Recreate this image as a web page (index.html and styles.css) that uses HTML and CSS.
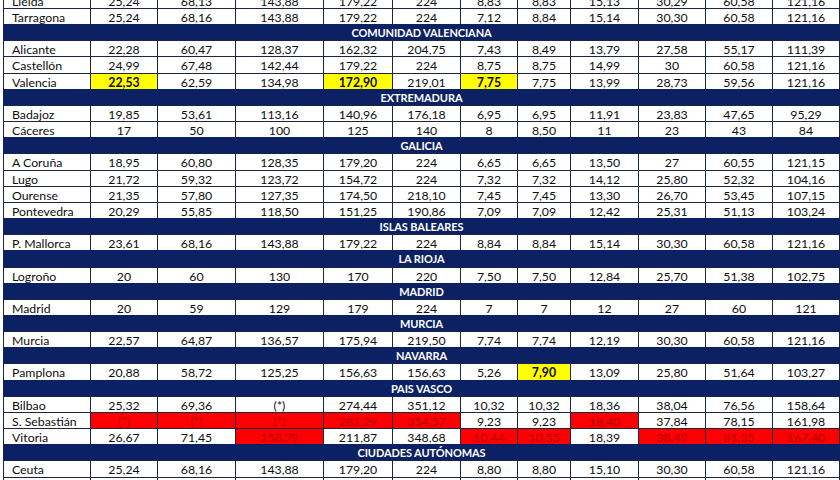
FILE: index.html
```html
<!DOCTYPE html>
<html lang="es">
<head>
<meta charset="utf-8">
<title>Tarifas</title>
<link rel="stylesheet" href="styles.css">
</head>
<body>
<div class="sheet">
  <div class="c city">Lleida</div><div class="c">25,24</div><div class="c">68,13</div><div class="c">143,88</div><div class="c">179,22</div><div class="c">224</div><div class="c">8,83</div><div class="c">8,83</div><div class="c">15,13</div><div class="c">30,29</div><div class="c">60,58</div><div class="c">121,16</div>
  <div class="c city">Tarragona</div><div class="c">25,24</div><div class="c">68,16</div><div class="c">143,88</div><div class="c">179,22</div><div class="c">224</div><div class="c">7,12</div><div class="c">8,84</div><div class="c">15,14</div><div class="c">30,30</div><div class="c">60,58</div><div class="c">121,16</div>
  <div class="h">COMUNIDAD VALENCIANA</div>
  <div class="c city">Alicante</div><div class="c">22,28</div><div class="c">60,47</div><div class="c">128,37</div><div class="c">162,32</div><div class="c">204,75</div><div class="c">7,43</div><div class="c">8,49</div><div class="c">13,79</div><div class="c">27,58</div><div class="c">55,17</div><div class="c">111,39</div>
  <div class="c city">Castellón</div><div class="c">24,99</div><div class="c">67,48</div><div class="c">142,44</div><div class="c">179,22</div><div class="c">224</div><div class="c">8,75</div><div class="c">8,75</div><div class="c">14,99</div><div class="c">30</div><div class="c">60,58</div><div class="c">121,16</div>
  <div class="c city">Valencia</div><div class="c y">22,53</div><div class="c">62,59</div><div class="c">134,98</div><div class="c y">172,90</div><div class="c">219,01</div><div class="c y">7,75</div><div class="c">7,75</div><div class="c">13,99</div><div class="c">28,73</div><div class="c">59,56</div><div class="c">121,16</div>
  <div class="h">EXTREMADURA</div>
  <div class="c city">Badajoz</div><div class="c">19,85</div><div class="c">53,61</div><div class="c">113,16</div><div class="c">140,96</div><div class="c">176,18</div><div class="c">6,95</div><div class="c">6,95</div><div class="c">11,91</div><div class="c">23,83</div><div class="c">47,65</div><div class="c">95,29</div>
  <div class="c city">Cáceres</div><div class="c">17</div><div class="c">50</div><div class="c">100</div><div class="c">125</div><div class="c">140</div><div class="c">8</div><div class="c">8,50</div><div class="c">11</div><div class="c">23</div><div class="c">43</div><div class="c">84</div>
  <div class="h">GALICIA</div>
  <div class="c city">A Coruña</div><div class="c">18,95</div><div class="c">60,80</div><div class="c">128,35</div><div class="c">179,20</div><div class="c">224</div><div class="c">6,65</div><div class="c">6,65</div><div class="c">13,50</div><div class="c">27</div><div class="c">60,55</div><div class="c">121,15</div>
  <div class="c city">Lugo</div><div class="c">21,72</div><div class="c">59,32</div><div class="c">123,72</div><div class="c">154,72</div><div class="c">224</div><div class="c">7,32</div><div class="c">7,32</div><div class="c">14,12</div><div class="c">25,80</div><div class="c">52,32</div><div class="c">104,16</div>
  <div class="c city">Ourense</div><div class="c">21,35</div><div class="c">57,80</div><div class="c">127,35</div><div class="c">174,50</div><div class="c">218,10</div><div class="c">7,45</div><div class="c">7,45</div><div class="c">13,30</div><div class="c">26,70</div><div class="c">53,45</div><div class="c">107,15</div>
  <div class="c city">Pontevedra</div><div class="c">20,29</div><div class="c">55,85</div><div class="c">118,50</div><div class="c">151,25</div><div class="c">190,86</div><div class="c">7,09</div><div class="c">7,09</div><div class="c">12,42</div><div class="c">25,31</div><div class="c">51,13</div><div class="c">103,24</div>
  <div class="h">ISLAS BALEARES</div>
  <div class="c city">P. Mallorca</div><div class="c">23,61</div><div class="c">68,16</div><div class="c">143,88</div><div class="c">179,22</div><div class="c">224</div><div class="c">8,84</div><div class="c">8,84</div><div class="c">15,14</div><div class="c">30,30</div><div class="c">60,58</div><div class="c">121,16</div>
  <div class="h">LA RIOJA</div>
  <div class="c city">Logroño</div><div class="c">20</div><div class="c">60</div><div class="c">130</div><div class="c">170</div><div class="c">220</div><div class="c">7,50</div><div class="c">7,50</div><div class="c">12,84</div><div class="c">25,70</div><div class="c">51,38</div><div class="c">102,75</div>
  <div class="h">MADRID</div>
  <div class="c city">Madrid</div><div class="c">20</div><div class="c">59</div><div class="c">129</div><div class="c">179</div><div class="c">224</div><div class="c">7</div><div class="c">7</div><div class="c">12</div><div class="c">27</div><div class="c">60</div><div class="c">121</div>
  <div class="h">MURCIA</div>
  <div class="c city">Murcia</div><div class="c">22,57</div><div class="c">64,87</div><div class="c">136,57</div><div class="c">175,94</div><div class="c">219,50</div><div class="c">7,74</div><div class="c">7,74</div><div class="c">12,19</div><div class="c">30,30</div><div class="c">60,58</div><div class="c">121,16</div>
  <div class="h">NAVARRA</div>
  <div class="c city">Pamplona</div><div class="c">20,88</div><div class="c">58,72</div><div class="c">125,25</div><div class="c">156,63</div><div class="c">156,63</div><div class="c">5,26</div><div class="c y">7,90</div><div class="c">13,09</div><div class="c">25,80</div><div class="c">51,64</div><div class="c">103,27</div>
  <div class="h">PAIS VASCO</div>
  <div class="c city">Bilbao</div><div class="c">25,32</div><div class="c">69,36</div><div class="c">(*)</div><div class="c">274,44</div><div class="c">351,12</div><div class="c">10,32</div><div class="c">10,32</div><div class="c">18,36</div><div class="c">38,04</div><div class="c">76,56</div><div class="c">158,64</div>
  <div class="c city">S. Sebastián</div><div class="c r">(*)</div><div class="c r">(*)</div><div class="c r">(*)</div><div class="c r">281,29</div><div class="c r">354,57</div><div class="c">9,23</div><div class="c">9,23</div><div class="c r">18,40</div><div class="c">37,84</div><div class="c">78,15</div><div class="c">161,98</div>
  <div class="c city">Vitoria</div><div class="c">26,67</div><div class="c">71,45</div><div class="c r">158,79</div><div class="c">211,87</div><div class="c">348,68</div><div class="c r">10,44</div><div class="c r">10,55</div><div class="c">18,39</div><div class="c r">38,49</div><div class="c r">81,35</div><div class="c r">167,40</div>
  <div class="h">CIUDADES AUTÓNOMAS</div>
  <div class="c city">Ceuta</div><div class="c">25,24</div><div class="c">68,16</div><div class="c">143,88</div><div class="c">179,20</div><div class="c">224</div><div class="c">8,80</div><div class="c">8,80</div><div class="c">15,10</div><div class="c">30,30</div><div class="c">60,58</div><div class="c">121,16</div>
  <div class="c city">Melilla</div><div class="c">25,24</div><div class="c">68,16</div><div class="c">143,88</div><div class="c">179,20</div><div class="c">224</div><div class="c">8,80</div><div class="c">8,80</div><div class="c">15,10</div><div class="c">30,30</div><div class="c">60,58</div><div class="c">121,16</div>
</div>
</body>
</html>
```
FILE: styles.css
```css
html, body {
  margin: 0;
  padding: 0;
  background: #ffffff;
  overflow: hidden;
}
body {
  width: 840px;
  height: 480px;
  font-family: Lato, "Liberation Sans", sans-serif;
}
.sheet {
  margin: -8.17px 0 0 3px;
  width: 837px;
  box-sizing: border-box;
  padding: 1px;
  background: #1b2645;
  display: grid;
  grid-template-columns: 86px 66px 77px 87px 68px 67px 56px 52px 67px 66px 66px 66px;
  grid-auto-rows: 15.17px;
  gap: 1px;
}
.c {
  background: #ffffff;
  color: #0e0e0e;
  font-size: 12.3px;
  line-height: 15px;
  text-align: center;
  white-space: nowrap;
  overflow: hidden;
  padding-top: 1px;
}
.city {
  text-align: left;
  padding-left: 8px;
}
.h {
  grid-column: 1 / -1;
  background: #0b2163;
  margin: -1px -1px 0;
  color: #ffffff;
  font-weight: 700;
  font-size: 11px;
  letter-spacing: -0.1px;
  line-height: 15px;
  text-align: center;
  padding-top: 1px;
}
.y {
  background: #ffff00;
  font-weight: 700;
}
.r {
  background: #ff0000;
  color: #b00000;
}
```
